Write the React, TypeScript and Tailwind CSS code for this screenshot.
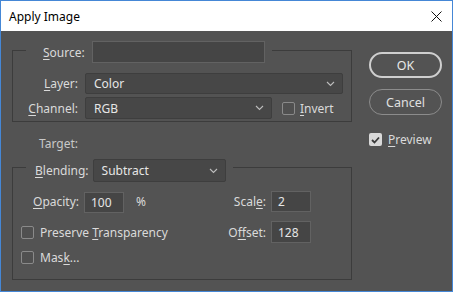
import React from "react";

const F = { fontFamily: '"Noto Sans", "Open Sans", sans-serif' };

function U({ children }: { children: React.ReactNode }) {
  return <span className="underline underline-offset-2 decoration-1">{children}</span>;
}

function Chevron() {
  return (
    <svg width="9" height="6" viewBox="0 0 9 6" className="shrink-0">
      <path d="M1 1 L4.5 4.5 L8 1" fill="none" stroke="#bdbdbd" strokeWidth="1.1" />
    </svg>
  );
}

function Select({ value, w, h }: { value: string; w: string; h: string }) {
  return (
    <div
      className={`${w} ${h} flex items-center justify-between pl-[8px] pr-[7px] bg-[#474747] border border-[#3e3e3e] rounded-[2px] text-[#e6e6e6]`}
    >
      <span>{value}</span>
      <Chevron />
    </div>
  );
}

function Input({ value, w, h }: { value: string; w: string; h: string }) {
  return (
    <div
      className={`${w} ${h} flex items-center pl-[6px] bg-[#454545] border border-[#626262] text-[#e6e6e6]`}
    >
      {value}
    </div>
  );
}

function Check({ checked }: { checked?: boolean }) {
  if (checked) {
    return (
      <div className="w-[13px] h-[13px] rounded-[2px] bg-[#d9d9d9] flex items-center justify-center shrink-0">
        <svg width="9" height="8" viewBox="0 0 9 8">
          <path d="M1 4 L3.5 6.5 L8 1.5" fill="none" stroke="#3a3a3a" strokeWidth="1.8" />
        </svg>
      </div>
    );
  }
  return <div className="w-[13px] h-[13px] rounded-[2px] border border-[#8a8a8a] bg-[#505050] shrink-0" />;
}

export default function App() {
  return (
    <div
      style={F}
      className="w-[453px] h-[292px] border border-[#4587d6] bg-[#535353] text-[12px] leading-[15px] text-[#dadada] flex flex-col overflow-hidden"
    >
      {/* Title bar */}
      <div className="h-[30px] bg-white flex items-center justify-between pl-[8px] pr-[10px] text-black text-[12px] shrink-0">
        <span>Apply Image</span>
        <svg width="11" height="11" viewBox="0 0 11 11">
          <path d="M0.5 0.5 L10.5 10.5 M10.5 0.5 L0.5 10.5" stroke="#111" strokeWidth="1" />
        </svg>
      </div>

      {/* Body */}
      <div className="flex pl-[11px]">
        {/* Left column */}
        <div className="w-[340px] flex flex-col">
          {/* Source group */}
          <div className="mt-[19px] h-[72px] border border-[#3c3c3c] flex flex-col">
            <div className="-mt-[10px] flex pl-[13px]">
              <div className="bg-[#535353] flex items-center pl-[17px] pr-[7px] gap-[7px]">
                <span>
                  <U>S</U>ource:
                </span>
                <Input value="" w="w-[173px]" h="h-[22px]" />
              </div>
            </div>
            <div className="mt-[10px] flex items-center">
              <div className="w-[65px] text-right">
                <U>L</U>ayer:
              </div>
              <div className="ml-[7px]">
                <Select value="Color" w="w-[258px]" h="h-[21px]" />
              </div>
            </div>
            <div className="mt-[3px] flex items-center">
              <div className="w-[65px] text-right">
                <U>C</U>hannel:
              </div>
              <div className="ml-[7px]">
                <Select value="RGB" w="w-[187px]" h="h-[22px]" />
              </div>
              <div className="ml-[10px]">
                <Check />
              </div>
              <span className="ml-[5px]">
                <U>I</U>nvert
              </span>
            </div>
          </div>

          {/* Target */}
          <div className="mt-[14px] pl-[27px] text-[#c8c8c8]">Target:</div>

          {/* Blending group */}
          <div className="mt-[16px] h-[113px] border border-[#3c3c3c] flex flex-col">
            <div className="-mt-[9px] flex pl-[13px]">
              <div className="bg-[#535353] flex items-center pl-[9px] pr-[7px] gap-[4px]">
                <span>
                  <U>B</U>lending:
                </span>
                <Select value="Subtract" w="w-[133px]" h="h-[23px]" />
              </div>
            </div>
            <div className="mt-[8px] flex items-center h-[23px]">
              <span className="ml-[20px] w-[51px]">
                <U>O</U>pacity:
              </span>
              <div className="mt-[2px]">
                <Input value="100" w="w-[40px]" h="h-[21px]" />
              </div>
              <span className="ml-[12px]">%</span>
              <span className="ml-auto">
                Scal<U>e</U>:
              </span>
              <div className="ml-[5px] mr-[40px]">
                <Input value="2" w="w-[40px]" h="h-[21px]" />
              </div>
            </div>
            <div className="mt-[8px] flex items-center h-[22px]">
              <div className="ml-[8px]">
                <Check />
              </div>
              <span className="ml-[6px]">
                Preserve <U>T</U>ransparency
              </span>
              <span className="ml-auto">
                O<U>f</U>fset:
              </span>
              <div className="ml-[5px] mr-[40px]">
                <Input value="128" w="w-[40px]" h="h-[22px]" />
              </div>
            </div>
            <div className="mt-[3px] flex items-center h-[22px]">
              <div className="ml-[8px]">
                <Check />
              </div>
              <span className="ml-[6px]">
                Mas<U>k</U>...
              </span>
            </div>
          </div>
        </div>

        {/* Right column */}
        <div className="ml-[17px] flex flex-col pt-[21px]">
          <div className="w-[73px] h-[26px] rounded-full border-2 border-[#cfcfcf] flex items-center justify-center text-[#e8e8e8] text-[12.5px]">
            OK
          </div>
          <div className="mt-[11px] w-[73px] h-[26px] rounded-full border border-[#8c8c8c] flex items-center justify-center text-[#e0e0e0] text-[12.5px]">
            Cancel
          </div>
          <div className="mt-[17px] flex items-center">
            <Check checked />
            <span className="ml-[6px]">
              <U>P</U>review
            </span>
          </div>
        </div>
      </div>
    </div>
  );
}
